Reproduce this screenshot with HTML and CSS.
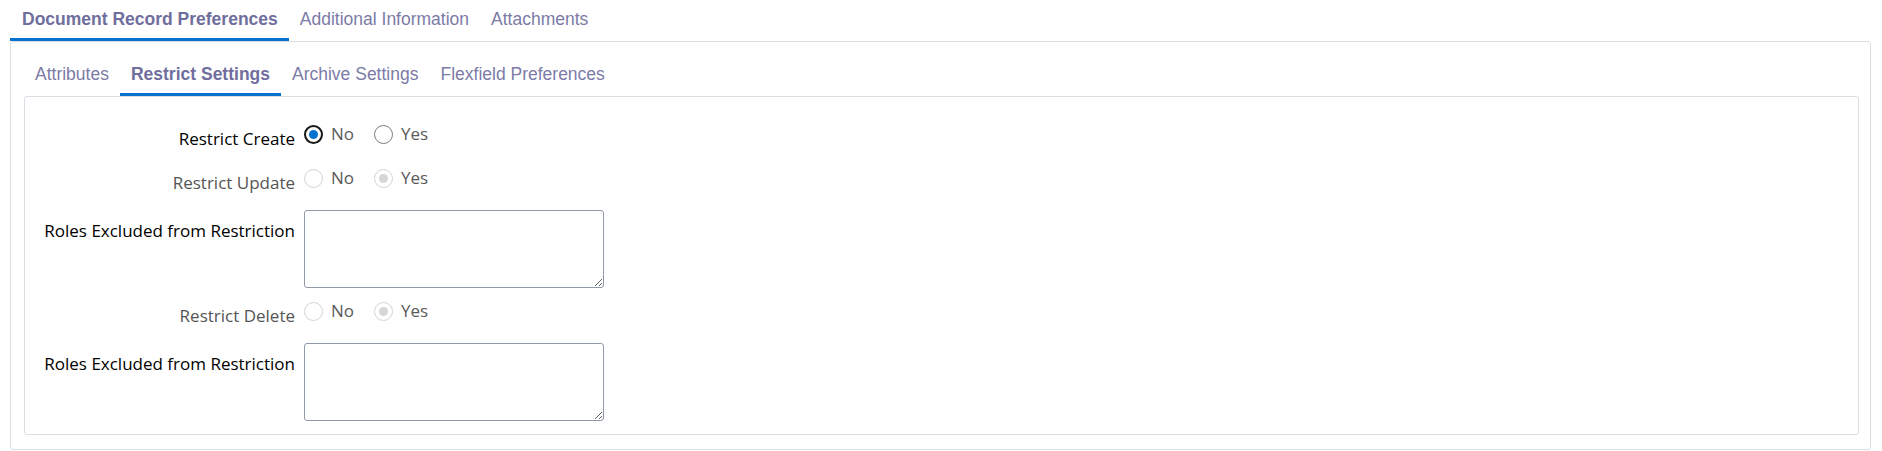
FILE: index.html
```html
<!DOCTYPE html>
<html lang="en">
<head>
<meta charset="utf-8">
<title>Document Record Preferences</title>
<link rel="stylesheet" href="styles.css">
</head>
<body>
<div class="page">
  <div class="tabs">
    <div class="tab tab-outer active">Document Record Preferences</div>
    <div class="tab tab-outer">Additional Information</div>
    <div class="tab tab-outer">Attachments</div>
  </div>
  <div class="panel panel-outer">
    <div class="tabs">
      <div class="tab tab-inner">Attributes</div>
      <div class="tab tab-inner active">Restrict Settings</div>
      <div class="tab tab-inner">Archive Settings</div>
      <div class="tab tab-inner">Flexfield Preferences</div>
    </div>
    <div class="panel panel-inner">
      <div class="form">
        <div class="lbl lbl-radio">Restrict Create</div>
        <div class="radios">
          <span class="opt"><span class="radio checked"></span><span class="opt-text">No</span></span>
          <span class="opt"><span class="radio"></span><span class="opt-text">Yes</span></span>
        </div>

        <div class="lbl lbl-radio disabled">Restrict Update</div>
        <div class="radios">
          <span class="opt"><span class="radio dis"></span><span class="opt-text">No</span></span>
          <span class="opt"><span class="radio dis dis-checked"></span><span class="opt-text">Yes</span></span>
        </div>

        <div class="lbl lbl-area">Roles Excluded from Restriction</div>
        <div class="area-wrap"><textarea class="area"></textarea></div>

        <div class="lbl lbl-radio disabled">Restrict Delete</div>
        <div class="radios">
          <span class="opt"><span class="radio dis"></span><span class="opt-text">No</span></span>
          <span class="opt"><span class="radio dis dis-checked"></span><span class="opt-text">Yes</span></span>
        </div>

        <div class="lbl lbl-area">Roles Excluded from Restriction</div>
        <div class="area-wrap"><textarea class="area"></textarea></div>
      </div>
    </div>
  </div>
</div>
</body>
</html>
```

FILE: styles.css
```css
html, body {
  margin: 0;
  padding: 0;
  background: #ffffff;
}

body {
  font-family: "Liberation Sans", Arial, sans-serif;
}

.page {
  padding: 0 11px 0 10px;
}

.tabs {
  display: flex;
  align-items: flex-end;
}

.tab {
  padding: 8px 11px 8px 11px;
  line-height: 22px;
  color: #7c7ba7;
  border-bottom: 3px solid transparent;
  white-space: nowrap;
}

.tab-outer {
  font-size: 17.5px;
}

.tab-outer.active {
  font-weight: bold;
  color: #6f6e9d;
  border-bottom-color: #0572ce;
  padding-left: 12px;
}

.tab-inner {
  font-size: 17.5px;
}

.tab-inner.active {
  font-weight: bold;
  color: #6f6e9d;
  border-bottom-color: #0572ce;
}

.panel {
  border: 1px solid #d9dfe5;
  border-radius: 3px;
}

.panel-outer {
  padding: 13px 11px 14px 13px;
}

.panel-inner {
  padding: 25px 0 13px 0;
}

.form {
  display: grid;
  grid-template-columns: 270px auto;
  column-gap: 9px;
  row-gap: 11px;
  justify-content: start;
  font-family: "Open Sans", "Noto Sans", sans-serif;
  font-size: 17px;
  font-weight: 500;
}

.lbl {
  text-align: right;
  line-height: 22px;
  color: #000000;
  white-space: nowrap;
}

.lbl-radio {
  padding-top: 6px;
}

.lbl-area {
  padding-top: 10px;
}

.lbl.disabled {
  color: #555555;
}

.radios {
  display: flex;
  align-items: flex-start;
  gap: 20px;
  min-height: 33px;
  padding-top: 1px;
  box-sizing: border-box;
}

.opt {
  display: flex;
  align-items: center;
  gap: 8px;
  height: 22px;
}

.opt-text {
  line-height: 22px;
  color: #5a5a5a;
}

.radio {
  width: 19px;
  height: 19px;
  box-sizing: border-box;
  border-radius: 50%;
  border: 1px solid #7d7d7d;
  background: #ffffff;
  display: flex;
  align-items: center;
  justify-content: center;
  flex: none;
}

.radio.checked {
  border: 2.5px solid #161616;
}

.radio.checked::after {
  content: "";
  width: 9px;
  height: 9px;
  border-radius: 50%;
  background: #0572ce;
}

.radio.dis {
  border-color: #d4d4d4;
}

.radio.dis-checked::after {
  content: "";
  width: 9px;
  height: 9px;
  border-radius: 50%;
  background: #d6d6d6;
}

.area-wrap {
  display: flex;
}

.area {
  display: block;
  width: 300px;
  height: 78px;
  box-sizing: border-box;
  margin: 0;
  border: 1px solid #8f9aa6;
  border-radius: 3px;
  background: #ffffff;
  resize: both;
  font-family: "Open Sans", sans-serif;
  font-size: 16px;
}
```
